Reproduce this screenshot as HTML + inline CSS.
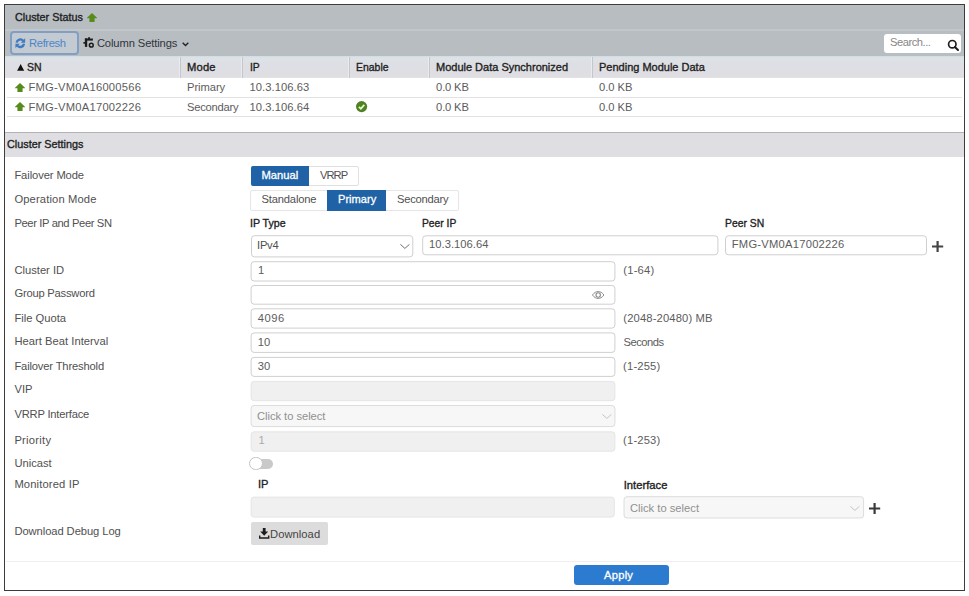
<!DOCTYPE html>
<html lang="en"><head><meta charset="utf-8"><title>Cluster Settings</title>
<style>
html,body{margin:0;padding:0;background:#fff}
body{width:969px;height:596px;position:relative;overflow:hidden;font-family:"Liberation Sans",sans-serif;font-size:11.2px;line-height:14px}
.t{position:absolute;white-space:pre;line-height:14px;transform-origin:0 50%}
.a{position:absolute;box-sizing:border-box}
svg{position:absolute;overflow:visible}

</style></head>
<body>
<div class="a" style="left:4px;top:4px;width:961px;height:587px;border:1px solid #3c3c3c"></div>
<div class="a" style="left:5px;top:5px;width:959px;height:52px;background:#b8bdc1"></div>
<div class="a" style="left:5px;top:5px;width:959px;height:1px;background:#bebfc0"></div><div class="a" style="left:5px;top:28.6px;width:959px;height:2px;background:linear-gradient(#bcc1c5,#c5cace 40%,#bec3c7)"></div>
<!-- refresh button -->
<div class="a" style="left:10px;top:31px;width:69px;height:24.4px;border:2px solid #819fc3;border-radius:4px;background:#c3cad2"></div>
<!-- search -->
<div class="a" style="left:884px;top:34px;width:77px;height:19px;border-radius:3px;background:#fff"></div>
<!-- table header -->
<div class="a" style="left:5px;top:56px;width:959px;height:22px;background:linear-gradient(#d3dae0,#dce3e8 8%,#dde2e7 20%,#dedfe4 32%,#dedee3 94%,#e6e6e8)"></div>
<div class="a" style="left:178.5px;top:57px;width:1.5px;height:20.9px;background:#e9ebee"></div><div class="a" style="left:180px;top:57px;width:1px;height:20.9px;background:#c4c7ca"></div>
<div class="a" style="left:240.5px;top:57px;width:1.5px;height:20.9px;background:#e9ebee"></div><div class="a" style="left:242px;top:57px;width:1px;height:20.9px;background:#c4c7ca"></div>
<div class="a" style="left:347.5px;top:57px;width:1.5px;height:20.9px;background:#e9ebee"></div><div class="a" style="left:349px;top:57px;width:1px;height:20.9px;background:#c4c7ca"></div>
<div class="a" style="left:427.5px;top:57px;width:1.5px;height:20.9px;background:#e9ebee"></div><div class="a" style="left:429px;top:57px;width:1px;height:20.9px;background:#c4c7ca"></div>
<div class="a" style="left:590.5px;top:57px;width:1.5px;height:20.9px;background:#e9ebee"></div><div class="a" style="left:592px;top:57px;width:1px;height:20.9px;background:#c4c7ca"></div>
<div class="a" style="left:7px;top:97px;width:955px;height:1px;background:#e2e2e2"></div>
<div class="a" style="left:7px;top:116px;width:955px;height:1px;background:#e2e2e2"></div>
<!-- section header -->
<div class="a" style="left:5px;top:132px;width:959px;height:25.4px;background:#dedee3;border-top:1px solid #b2b3b7"></div>
<!-- segmented buttons -->
<div class="a" style="left:251px;top:166px;width:108px;height:19.5px;border:1px solid #e0e0e0;border-radius:2px;background:#fff"></div>
<div class="a" style="left:251px;top:166px;width:58px;height:19.5px;border-radius:2px 0 0 2px;background:#1f63a6"></div>
<div class="a" style="left:250px;top:189.6px;width:208.5px;height:21px;border:1px solid #e6e6e6;border-radius:2px;background:#fff"></div>
<div class="a" style="left:327px;top:190px;width:59px;height:20.5px;background:#1f63a6"></div>
<!-- inputs -->
<svg style="left:0;top:0" width="969" height="596" viewBox="0 0 969 596">
<rect x="251.5" y="235.7" width="161.3" height="21.2" rx="3" fill="#fff" stroke="#cfcfcf"/>
<rect x="422.7" y="235.8" width="295.2" height="19.0" rx="3" fill="#fff" stroke="#cfcfcf"/>
<rect x="725.5" y="235.8" width="201.0" height="19.0" rx="3" fill="#fff" stroke="#cfcfcf"/>
<rect x="251.1" y="261.7" width="363.8" height="19.3" rx="3" fill="#fff" stroke="#cfcfcf"/>
<rect x="251.1" y="285.5" width="363.8" height="18.7" rx="3" fill="#fff" stroke="#cfcfcf"/>
<rect x="251.1" y="308.8" width="363.8" height="19.3" rx="3" fill="#fff" stroke="#cfcfcf"/>
<rect x="251.1" y="332.9" width="363.8" height="19.5" rx="3" fill="#fff" stroke="#cfcfcf"/>
<rect x="251.1" y="357.4" width="363.8" height="19.0" rx="3" fill="#fff" stroke="#cfcfcf"/>
<rect x="251.1" y="381.4" width="363.8" height="19.3" rx="3" fill="#f0f0f0" stroke="#e5e5e5"/>
<rect x="251.1" y="405.5" width="363.8" height="21.1" rx="3" fill="#f7f7f7" stroke="#dcdcdc"/>
<rect x="251.1" y="431.8" width="363.8" height="19.4" rx="3" fill="#f0f0f0" stroke="#e5e5e5"/>
<rect x="251.1" y="497.1" width="363.2" height="20.0" rx="3" fill="#f0f0f0" stroke="#e5e5e5"/>
<rect x="624.0" y="496.7" width="239.6" height="21.3" rx="3" fill="#f7f7f7" stroke="#dcdcdc"/>
</svg>
<!-- toggle -->
<div class="a" style="left:252px;top:458.8px;width:20.6px;height:10px;border-radius:5px;background:#c9c9c9"></div>
<div class="a" style="left:249.3px;top:457px;width:13.4px;height:13.4px;border-radius:50%;background:#fff;border:1px solid #c4c4c4"></div>
<!-- download button -->
<div class="a" style="left:250.7px;top:522.4px;width:77px;height:23px;border-radius:2px;background:#dcdcdc"></div>
<!-- footer -->
<div class="a" style="left:6px;top:561px;width:957px;height:1px;background:#efefef"></div>
<div class="a" style="left:574px;top:564.8px;width:95px;height:20.7px;border-radius:3px;background:#2b7bd0"></div>
<!-- icons -->
<svg style="left:87.1px;top:12.8px" width="10" height="9" viewBox="0 0 10.4 9.4"><path fill="#578c1c" d="M5.2 0L10.4 4.9V5.5H7.9V9.4H2.5V5.5H0V4.9Z"/></svg>
<svg style="left:15.1px;top:82.8px" width="10" height="9" viewBox="0 0 10.4 9.4"><path fill="#578c1c" d="M5.2 0L10.4 4.9V5.5H7.9V9.4H2.5V5.5H0V4.9Z"/></svg>
<svg style="left:15.1px;top:102.3px" width="10" height="9" viewBox="0 0 10.4 9.4"><path fill="#578c1c" d="M5.2 0L10.4 4.9V5.5H7.9V9.4H2.5V5.5H0V4.9Z"/></svg>
<!-- refresh icon -->
<svg style="left:14.6px;top:37.6px" width="10.6" height="10.4" viewBox="0 0 12 12"><g fill="none" stroke="#3d7bc2" stroke-width="2.7"><path d="M1.7 5.3A4.4 4.4 0 0 1 9.3 3.1"/><path d="M10.3 6.7A4.4 4.4 0 0 1 2.7 8.9"/></g><path fill="#3d7bc2" d="M11.6 0.4V5.4H6.6zM0.4 11.6V6.6H5.4z"/></svg>
<!-- column settings icon -->
<svg style="left:83px;top:37px" width="11" height="11" viewBox="0 0 11 11"><g fill="#1c1c1c"><rect x="1.9" y="1.4" width="2.3" height="8.5"/><rect x="1.9" y="1.5" width="8" height="2.1"/><rect x="5" y="0.3" width="2" height="1.6"/><rect x="0.4" y="5" width="3.6" height="1.7"/></g><circle cx="8.3" cy="8.2" r="1.9" fill="none" stroke="#1c1c1c" stroke-width="1.5"/></svg>
<!-- chevron after column settings -->
<svg style="left:181.6px;top:41.9px" width="7" height="4.4" viewBox="0 0 6.6 4.2"><path d="M0.6 0.7L3.3 3.4L6 0.7" fill="none" stroke="#222" stroke-width="1.3"/></svg>
<!-- sort triangle -->
<svg style="left:17.1px;top:63.8px" width="7.3" height="6.8" viewBox="0 0 7.5 7.2"><polygon fill="#111" points="3.75,0 7.5,7.2 0,7.2"/></svg>
<!-- magnifier -->
<svg style="left:947px;top:38.5px" width="12" height="12" viewBox="0 0 12 12"><circle cx="5.3" cy="5.2" r="3.7" fill="none" stroke="#1e1e1e" stroke-width="1.7"/><path d="M7.9 8L11 11" stroke="#1e1e1e" stroke-width="2" stroke-linecap="round"/></svg>
<!-- check circle -->
<svg style="left:356.2px;top:101px" width="11.2" height="11.2" viewBox="0 0 12 12"><circle cx="6" cy="6" r="6" fill="#4f8125"/><path d="M3.1 6.2L5.2 8.2L8.9 4.2" fill="none" stroke="#e2f8bd" stroke-width="1.9"/></svg>
<!-- select chevrons -->
<svg style="left:399.6px;top:243.6px" width="9.8" height="5" viewBox="0 0 9.8 5"><path d="M0.4 0.4L4.9 4.4L9.4 0.4" fill="none" stroke="#6e6e6e" stroke-width="1"/></svg>
<svg style="left:601.8px;top:413.6px" width="9.8" height="5" viewBox="0 0 9.8 5"><path d="M0.4 0.4L4.9 4.4L9.4 0.4" fill="none" stroke="#c4c4c4" stroke-width="1"/></svg>
<svg style="left:849.6px;top:505.6px" width="9.8" height="5" viewBox="0 0 9.8 5"><path d="M0.4 0.4L4.9 4.4L9.4 0.4" fill="none" stroke="#c4c4c4" stroke-width="1"/></svg>
<!-- plus icons -->
<svg style="left:931.7px;top:240.6px" width="11.2" height="11" viewBox="0 0 11.2 11"><path d="M5.6 0V11M0 5.5H11.2" stroke="#444" stroke-width="2.2"/></svg>
<svg style="left:869.2px;top:502.7px" width="11.2" height="11" viewBox="0 0 11.2 11"><path d="M5.6 0V11M0 5.5H11.2" stroke="#3a3a3a" stroke-width="2.2"/></svg>
<!-- eye -->
<svg style="left:591.6px;top:290.6px" width="12.4" height="8" viewBox="0 0 12.4 8"><path d="M0.5 4C2.4 1.3 4.2 0.6 6.2 0.6S10 1.3 11.9 4C10 6.7 8.2 7.4 6.2 7.4S2.4 6.7 0.5 4Z" fill="none" stroke="#8a8a8a" stroke-width="1"/><circle cx="6.2" cy="4" r="2.2" fill="none" stroke="#8a8a8a" stroke-width="1.1"/></svg>
<!-- download icon -->
<svg style="left:259px;top:527.8px" width="10.4" height="10.8" viewBox="0 0 10.4 10.8"><path fill="#1e1e1e" d="M3.8 0H6.6V3.6H9.2L5.2 7.8L1.2 3.6H3.8Z"/><path d="M0.7 7.6V10H9.7V7.6" fill="none" stroke="#1e1e1e" stroke-width="1.4"/></svg>

<span class="t" style="left:14.5px;top:10.2px;color:#222;transform:scaleX(0.965);-webkit-text-stroke:0.35px #222">Cluster Status</span>
<span class="t" style="left:29.1px;top:36.3px;color:#4a86c8;letter-spacing:-0.38px">Refresh</span>
<span class="t" style="left:96.9px;top:36.3px;color:#30343a;letter-spacing:-0.11px">Column Settings</span>
<span class="t" style="left:889.9px;top:34.9px;color:#878787;letter-spacing:-0.47px">Search...</span>
<span class="t" style="left:27.1px;top:60.0px;color:#222;transform:scaleX(0.937);-webkit-text-stroke:0.35px #222">SN</span>
<span class="t" style="left:187.0px;top:60.0px;color:#222;letter-spacing:0.17px;-webkit-text-stroke:0.35px #222">Mode</span>
<span class="t" style="left:249.5px;top:60.0px;color:#222;transform:scaleX(0.922);-webkit-text-stroke:0.35px #222">IP</span>
<span class="t" style="left:356.0px;top:60.0px;color:#222;transform:scaleX(0.934);-webkit-text-stroke:0.35px #222">Enable</span>
<span class="t" style="left:436.1px;top:60.0px;color:#222;transform:scaleX(0.983);-webkit-text-stroke:0.35px #222">Module Data Synchronized</span>
<span class="t" style="left:599.0px;top:60.0px;color:#222;transform:scaleX(0.983);-webkit-text-stroke:0.35px #222">Pending Module Data</span>
<span class="t" style="left:28.4px;top:80.3px;color:#5c5c5c;letter-spacing:0.25px">FMG-VM0A16000566</span>
<span class="t" style="left:187.0px;top:80.3px;color:#5c5c5c;letter-spacing:-0.06px">Primary</span>
<span class="t" style="left:249.5px;top:80.3px;color:#5c5c5c;letter-spacing:0.06px">10.3.106.63</span>
<span class="t" style="left:436.1px;top:80.3px;color:#5c5c5c;letter-spacing:-0.16px">0.0 KB</span>
<span class="t" style="left:599.0px;top:80.3px;color:#5c5c5c;letter-spacing:-0.02px">0.0 KB</span>
<span class="t" style="left:28.4px;top:99.8px;color:#5c5c5c;letter-spacing:0.25px">FMG-VM0A17002226</span>
<span class="t" style="left:187.0px;top:99.8px;color:#5c5c5c;letter-spacing:-0.25px">Secondary</span>
<span class="t" style="left:249.5px;top:99.8px;color:#5c5c5c;letter-spacing:0.06px">10.3.106.64</span>
<span class="t" style="left:436.1px;top:99.8px;color:#5c5c5c;letter-spacing:-0.16px">0.0 KB</span>
<span class="t" style="left:599.0px;top:99.8px;color:#5c5c5c;letter-spacing:-0.02px">0.0 KB</span>
<span class="t" style="left:6.7px;top:137.0px;color:#222;transform:scaleX(0.967);-webkit-text-stroke:0.35px #222">Cluster Settings</span>
<span class="t" style="left:14.4px;top:167.6px;color:#505050;letter-spacing:-0.10px">Failover Mode</span>
<span class="t" style="left:14.4px;top:191.7px;color:#505050;letter-spacing:0.14px">Operation Mode</span>
<span class="t" style="left:14.4px;top:216.1px;color:#505050;letter-spacing:-0.37px">Peer IP and Peer SN</span>
<span class="t" style="left:14.4px;top:263.0px;color:#505050">Cluster ID</span>
<span class="t" style="left:14.4px;top:286.3px;color:#505050;letter-spacing:-0.21px">Group Password</span>
<span class="t" style="left:14.4px;top:310.5px;color:#505050;letter-spacing:0.01px">File Quota</span>
<span class="t" style="left:14.4px;top:334.3px;color:#505050;letter-spacing:0.03px">Heart Beat Interval</span>
<span class="t" style="left:14.4px;top:358.6px;color:#505050;letter-spacing:-0.16px">Failover Threshold</span>
<span class="t" style="left:14.4px;top:382.4px;color:#505050;letter-spacing:0.03px">VIP</span>
<span class="t" style="left:14.4px;top:406.8px;color:#505050;letter-spacing:-0.20px">VRRP Interface</span>
<span class="t" style="left:14.4px;top:432.6px;color:#505050;letter-spacing:0.27px">Priority</span>
<span class="t" style="left:14.4px;top:456.3px;color:#505050">Unicast</span>
<span class="t" style="left:14.4px;top:477.4px;color:#505050;letter-spacing:0.15px">Monitored IP</span>
<span class="t" style="left:14.4px;top:524.2px;color:#505050;letter-spacing:-0.07px">Download Debug Log</span>
<span class="t" style="left:261.5px;top:168.0px;color:#fff;letter-spacing:0.02px;-webkit-text-stroke:0.3px #fff">Manual</span>
<span class="t" style="left:320.0px;top:168.0px;color:#505050;letter-spacing:-0.96px">VRRP</span>
<span class="t" style="left:261.5px;top:192.3px;color:#505050;letter-spacing:-0.18px">Standalone</span>
<span class="t" style="left:337.5px;top:192.3px;color:#fff;transform:scaleX(0.991);-webkit-text-stroke:0.3px #fff">Primary</span>
<span class="t" style="left:397.0px;top:192.3px;color:#505050;letter-spacing:-0.24px">Secondary</span>
<span class="t" style="left:250.2px;top:216.1px;color:#222;transform:scaleX(0.950);-webkit-text-stroke:0.35px #222">IP Type</span>
<span class="t" style="left:421.8px;top:216.1px;color:#222;transform:scaleX(0.918);-webkit-text-stroke:0.35px #222">Peer IP</span>
<span class="t" style="left:724.6px;top:216.1px;color:#222;transform:scaleX(0.926);-webkit-text-stroke:0.35px #222">Peer SN</span>
<span class="t" style="left:258.1px;top:477.4px;color:#222;transform:scaleX(0.992);-webkit-text-stroke:0.35px #222">IP</span>
<span class="t" style="left:623.7px;top:477.8px;color:#222;letter-spacing:0.02px;-webkit-text-stroke:0.35px #222">Interface</span>
<span class="t" style="left:257.0px;top:238.4px;color:#505050;letter-spacing:-0.23px">IPv4</span>
<span class="t" style="left:429.0px;top:236.7px;color:#5c5c5c;letter-spacing:0.04px">10.3.106.64</span>
<span class="t" style="left:731.8px;top:236.7px;color:#5c5c5c;letter-spacing:0.24px">FMG-VM0A17002226</span>
<span class="t" style="left:258.1px;top:262.8px;color:#5c5c5c">1</span>
<span class="t" style="left:257.7px;top:310.6px;color:#5c5c5c;letter-spacing:0.57px">4096</span>
<span class="t" style="left:257.7px;top:334.5px;color:#5c5c5c">10</span>
<span class="t" style="left:257.7px;top:358.7px;color:#5c5c5c">30</span>
<span class="t" style="left:257.0px;top:409.3px;color:#909090;letter-spacing:-0.04px">Click to select</span>
<span class="t" style="left:258.5px;top:433.2px;color:#aaa">1</span>
<span class="t" style="left:629.9px;top:500.5px;color:#909090;letter-spacing:0.01px">Click to select</span>
<span class="t" style="left:623.3px;top:263.2px;color:#5c5c5c;letter-spacing:0.21px">(1-64)</span>
<span class="t" style="left:623.3px;top:310.6px;color:#5c5c5c;letter-spacing:0.15px">(2048-20480) MB</span>
<span class="t" style="left:623.5px;top:334.5px;color:#5c5c5c;letter-spacing:-0.51px">Seconds</span>
<span class="t" style="left:623.1px;top:358.9px;color:#5c5c5c;letter-spacing:0.17px">(1-255)</span>
<span class="t" style="left:623.1px;top:433.2px;color:#5c5c5c;letter-spacing:0.17px">(1-253)</span>
<span class="t" style="left:270.0px;top:526.8px;color:#444;letter-spacing:0.05px">Download</span>
<span class="t" style="left:604.1px;top:568.3px;color:#fff;letter-spacing:0.22px;-webkit-text-stroke:0.3px #fff">Apply</span>
</body></html>
